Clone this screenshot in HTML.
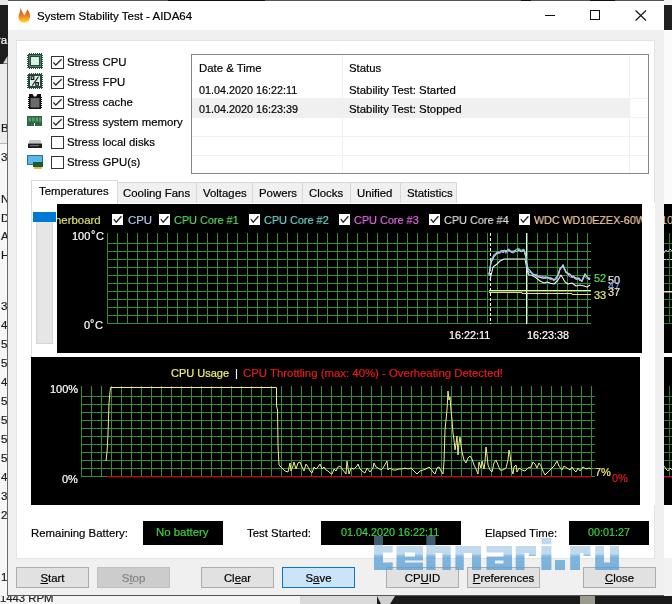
<!DOCTYPE html>
<html><head><meta charset="utf-8">
<style>
*{margin:0;padding:0;box-sizing:border-box}
html,body{width:672px;height:604px;overflow:hidden;background:#1b1b1b;position:relative;font-family:"Liberation Sans",sans-serif;font-size:11.4px;color:#000}
.a{position:absolute}
.t{position:absolute;white-space:pre;line-height:1;will-change:transform;-webkit-text-stroke:0.2px currentColor}
.cb{position:absolute;width:13px;height:13px;border:1px solid #333;background:#fff}
.cb svg{position:absolute;left:1px;top:1px}
.btn{position:absolute;height:21px;border:1px solid #adadad;background:#e1e1e1;text-align:center;line-height:21px;font-size:11.4px;will-change:transform;-webkit-text-stroke:0.2px currentColor}
.btn u{text-underline-offset:1px}
.tab{position:absolute;top:182px;height:21px;border:1px solid #d9d9d9;border-bottom:none;background:#f0f0f0}
.blk{position:absolute;background:#000}
</style></head><body>

<!-- background left strip -->
<div class="a" style="left:0;top:0;width:8px;height:5px;background:#e8e8e8"></div>
<div class="a" style="left:0;top:59px;width:8px;height:85px;background:#ececec"></div>
<svg class="a" style="left:0;top:5px" width="8" height="59"><path d="M0,0 H8 V59 H0 Z" fill="#1e1e1e"/><path d="M7.5,51 V58.5 H3 Z" fill="#d8d8d8"/></svg>
<div class="t" style="left:-3px;top:35px;color:#fff;font-size:11.5px">ra</div>
<div class="a" style="left:0;top:144px;width:8px;height:452px;background:#f6f6f6"></div>
<div class="a" style="left:0;top:143px;width:8px;height:1px;background:#b8b8b8"></div>
<div class="t" style="left:1px;top:123px;font-size:11.5px;color:#1a1a1a">B</div>
<div class="t" style="left:1px;top:152px;font-size:11.5px;color:#1a1a1a">3</div>
<div class="t" style="left:1px;top:194px;font-size:11.5px;color:#1a1a1a">N</div>
<div class="t" style="left:1px;top:212.5px;font-size:11.5px;color:#1a1a1a">D</div>
<div class="t" style="left:1px;top:231px;font-size:11.5px;color:#1a1a1a">A</div>
<div class="t" style="left:1px;top:249.5px;font-size:11.5px;color:#1a1a1a">H</div>
<div class="t" style="left:1px;top:301px;font-size:11.5px;color:#1a1a1a">3</div>
<div class="t" style="left:1px;top:320px;font-size:11.5px;color:#1a1a1a">4</div>
<div class="t" style="left:1px;top:339px;font-size:11.5px;color:#1a1a1a">5</div>
<div class="t" style="left:1px;top:358px;font-size:11.5px;color:#1a1a1a">5</div>
<div class="t" style="left:1px;top:377px;font-size:11.5px;color:#1a1a1a">4</div>
<div class="t" style="left:1px;top:396px;font-size:11.5px;color:#1a1a1a">5</div>
<div class="t" style="left:1px;top:415px;font-size:11.5px;color:#1a1a1a">5</div>
<div class="t" style="left:1px;top:434px;font-size:11.5px;color:#1a1a1a">5</div>
<div class="t" style="left:1px;top:453px;font-size:11.5px;color:#1a1a1a">5</div>
<div class="t" style="left:1px;top:472px;font-size:11.5px;color:#1a1a1a">4</div>
<div class="t" style="left:1px;top:491px;font-size:11.5px;color:#1a1a1a">3</div>
<div class="t" style="left:1px;top:510px;font-size:11.5px;color:#1a1a1a">2</div>
<div class="t" style="left:1px;top:572px;font-size:11.5px;color:#1a1a1a">1</div>
<div class="a" style="left:7px;top:63px;width:1px;height:533px;background:#6a6a6a"></div>

<!-- right strip -->
<div class="a" style="left:664px;top:0;width:8px;height:5px;background:#f4f4f4"></div>
<div class="a" style="left:664px;top:5px;width:8px;height:25px;background:#202020"></div>
<div class="a" style="left:664px;top:30px;width:8px;height:566px;background:#f2f2f2"></div>
<div class="a" style="left:664px;top:30px;width:8px;height:174px;background:#fbfbfb"></div>
<div class="a" style="left:664px;top:353px;width:8px;height:4px;background:#fff"></div>
<div class="a" style="left:664px;top:505px;width:8px;height:53px;background:#fff"></div>
<div class="blk" style="left:664px;top:204px;width:8px;height:149px"></div>
<div class="blk" style="left:664px;top:357px;width:8px;height:148px"></div>
<svg class="a" style="left:664px;top:0" width="8" height="604">
<rect x="5" y="233" width="1" height="91" fill="#2c7a2c"/>
<rect x="0" y="243" width="8" height="1" fill="#2c7a2c"/><rect x="0" y="251" width="8" height="1" fill="#2c7a2c"/><rect x="0" y="259" width="8" height="1" fill="#2c7a2c"/><rect x="0" y="267" width="8" height="1" fill="#2c7a2c"/><rect x="0" y="275" width="8" height="1" fill="#2c7a2c"/><rect x="0" y="283" width="8" height="1" fill="#2c7a2c"/><rect x="0" y="291" width="8" height="1" fill="#2c7a2c"/><rect x="0" y="299" width="8" height="1" fill="#2c7a2c"/><rect x="0" y="307" width="8" height="1" fill="#2c7a2c"/><rect x="0" y="315" width="8" height="1" fill="#2c7a2c"/><rect x="0" y="323" width="8" height="1" fill="#2c7a2c"/>
<rect x="5" y="386" width="1" height="91" fill="#2c7a2c"/>
<rect x="0" y="396" width="8" height="1" fill="#2c7a2c"/><rect x="0" y="404" width="8" height="1" fill="#2c7a2c"/><rect x="0" y="412" width="8" height="1" fill="#2c7a2c"/><rect x="0" y="420" width="8" height="1" fill="#2c7a2c"/><rect x="0" y="428" width="8" height="1" fill="#2c7a2c"/><rect x="0" y="436" width="8" height="1" fill="#2c7a2c"/><rect x="0" y="444" width="8" height="1" fill="#2c7a2c"/><rect x="0" y="452" width="8" height="1" fill="#2c7a2c"/><rect x="0" y="460" width="8" height="1" fill="#2c7a2c"/><rect x="0" y="468" width="8" height="1" fill="#2c7a2c"/><rect x="0" y="476" width="8" height="1" fill="#2c7a2c"/>
<polyline points="0,253 2,250 4,252 6,249 8,251" stroke="#a8c8f0" fill="none"/>
<polyline points="0,259.5 8,259.5" stroke="#d0d0d0" stroke-dasharray="2,1" fill="none"/>
<rect x="0" y="291" width="8" height="1.5" fill="#e8e890"/>
<polyline points="0,466 2,469 4,471 6,468 8,470" stroke="#e0e070" fill="none"/>
<rect x="0" y="476" width="8" height="1.5" fill="#b01818"/>
<text x="-3" y="224" font-family="Liberation Sans" font-size="11" fill="#f0c8a0">10</text>
</svg>

<!-- bottom strip -->
<div class="a" style="left:0;top:596px;width:377px;height:8px;background:#f4f4f4"></div>
<div class="a" style="left:300px;top:596px;width:77px;height:8px;background:#dadada"></div>
<svg class="a" style="left:377px;top:596px" width="20" height="8"><rect width="20" height="8" fill="#1a1a1a"/><path d="M0,0 H18 L13,8 H4 Z" fill="#d0d0d0"/></svg>
<div class="a" style="left:397px;top:596px;width:275px;height:8px;background:#1a1a1a"></div>
<div class="a" style="left:580px;top:596px;width:15px;height:8px;background:#9a9a90"></div>
<div class="a" style="left:0;top:596px;width:300px;height:8px;overflow:hidden"><div class="t" style="left:0;top:-3px;font-size:11.3px;color:#222">1443 RPM</div></div>

<!-- top strip -->
<div class="a" style="left:8px;top:0;width:656px;height:1px;background:#555"></div>
<div class="a" style="left:168px;top:0;width:97px;height:1px;background:#111"></div>
<div class="a" style="left:521px;top:0;width:10px;height:1px;background:#111"></div>
<div class="a" style="left:590px;top:0;width:25px;height:1px;background:#111"></div>

<!-- window -->
<div class="a" style="left:8px;top:1px;width:656px;height:29px;background:#fff"></div>
<div class="a" style="left:8px;top:30px;width:656px;height:566px;background:#f0f0f0"></div>
<div class="a" style="left:8px;top:595px;width:656px;height:1px;background:#555"></div>
<div class="t" style="left:37px;top:11px;font-size:11.5px">System Stability Test - AIDA64</div>

<!--ICONSLATER-->
<!-- panel -->
<div class="a" style="left:16px;top:40px;width:639px;height:519px;background:#fff;border:1px solid #e3e3e3"></div>


<svg class="a" style="left:0;top:0" width="60" height="180">
<defs>
<linearGradient id="fl" x1="0" y1="0" x2="0" y2="1"><stop offset="0" stop-color="#d84010"/><stop offset="0.55" stop-color="#f08020"/><stop offset="1" stop-color="#ffd820"/></linearGradient>
</defs>
<path d="M20.5,8 C21.5,11 23,13 24.5,15.5 C25.5,13.5 26.5,11.5 27.5,9.5 C29.5,12 30.5,15 30,17.5 C29.5,20.5 27,22.5 24.5,22.5 C21,22.5 18.5,20.5 18.5,17 C18.5,14 20.5,12 20.5,8 Z" fill="url(#fl)"/>
<!-- CPU -->
<rect x="28" y="54" width="14" height="14" fill="#24483a"/>
<rect x="29.5" y="55.5" width="11" height="11" fill="none" stroke="#4c7c60" stroke-width="1"/>
<rect x="31" y="57" width="8" height="8" fill="#d8efe2"/>
<rect x="29" y="53" width="1" height="1" fill="#2c5640"/><rect x="31" y="53" width="1" height="1" fill="#2c5640"/><rect x="33" y="53" width="1" height="1" fill="#2c5640"/><rect x="35" y="53" width="1" height="1" fill="#2c5640"/><rect x="37" y="53" width="1" height="1" fill="#2c5640"/><rect x="39" y="53" width="1" height="1" fill="#2c5640"/><rect x="41" y="53" width="1" height="1" fill="#2c5640"/><rect x="29" y="68" width="1" height="1" fill="#2c5640"/><rect x="31" y="68" width="1" height="1" fill="#2c5640"/><rect x="33" y="68" width="1" height="1" fill="#2c5640"/><rect x="35" y="68" width="1" height="1" fill="#2c5640"/><rect x="37" y="68" width="1" height="1" fill="#2c5640"/><rect x="39" y="68" width="1" height="1" fill="#2c5640"/><rect x="41" y="68" width="1" height="1" fill="#2c5640"/><rect x="27" y="55" width="1" height="1" fill="#2c5640"/><rect x="27" y="57" width="1" height="1" fill="#2c5640"/><rect x="27" y="59" width="1" height="1" fill="#2c5640"/><rect x="27" y="61" width="1" height="1" fill="#2c5640"/><rect x="27" y="63" width="1" height="1" fill="#2c5640"/><rect x="27" y="65" width="1" height="1" fill="#2c5640"/><rect x="27" y="67" width="1" height="1" fill="#2c5640"/><rect x="42" y="55" width="1" height="1" fill="#2c5640"/><rect x="42" y="57" width="1" height="1" fill="#2c5640"/><rect x="42" y="59" width="1" height="1" fill="#2c5640"/><rect x="42" y="61" width="1" height="1" fill="#2c5640"/><rect x="42" y="63" width="1" height="1" fill="#2c5640"/><rect x="42" y="65" width="1" height="1" fill="#2c5640"/><rect x="42" y="67" width="1" height="1" fill="#2c5640"/>
<!-- FPU -->
<rect x="28" y="74" width="14" height="14" fill="#24483a"/>
<rect x="30" y="76" width="10" height="10" fill="#dcefe4"/>
<rect x="29" y="73" width="1" height="1" fill="#2c5640"/><rect x="31" y="73" width="1" height="1" fill="#2c5640"/><rect x="33" y="73" width="1" height="1" fill="#2c5640"/><rect x="35" y="73" width="1" height="1" fill="#2c5640"/><rect x="37" y="73" width="1" height="1" fill="#2c5640"/><rect x="39" y="73" width="1" height="1" fill="#2c5640"/><rect x="41" y="73" width="1" height="1" fill="#2c5640"/><rect x="29" y="88" width="1" height="1" fill="#2c5640"/><rect x="31" y="88" width="1" height="1" fill="#2c5640"/><rect x="33" y="88" width="1" height="1" fill="#2c5640"/><rect x="35" y="88" width="1" height="1" fill="#2c5640"/><rect x="37" y="88" width="1" height="1" fill="#2c5640"/><rect x="39" y="88" width="1" height="1" fill="#2c5640"/><rect x="41" y="88" width="1" height="1" fill="#2c5640"/><rect x="27" y="75" width="1" height="1" fill="#2c5640"/><rect x="27" y="77" width="1" height="1" fill="#2c5640"/><rect x="27" y="79" width="1" height="1" fill="#2c5640"/><rect x="27" y="81" width="1" height="1" fill="#2c5640"/><rect x="27" y="83" width="1" height="1" fill="#2c5640"/><rect x="27" y="85" width="1" height="1" fill="#2c5640"/><rect x="27" y="87" width="1" height="1" fill="#2c5640"/><rect x="42" y="75" width="1" height="1" fill="#2c5640"/><rect x="42" y="77" width="1" height="1" fill="#2c5640"/><rect x="42" y="79" width="1" height="1" fill="#2c5640"/><rect x="42" y="81" width="1" height="1" fill="#2c5640"/><rect x="42" y="83" width="1" height="1" fill="#2c5640"/><rect x="42" y="85" width="1" height="1" fill="#2c5640"/><rect x="42" y="87" width="1" height="1" fill="#2c5640"/>
<path d="M31.2,76.8 h2.6 v2.6 h-2.6 Z M35.8,82.6 h2.6 v2.6 h-2.6 Z M38.5,76.8 L32.3,85.5" fill="none" stroke="#111" stroke-width="1.1"/>
<!-- cache -->
<path d="M29,94 H32.5 L34,96.5 H36 L37.5,94 H41 V109 H29 Z" fill="#111"/>
<rect x="30.5" y="98" width="9" height="9.5" fill="#6a6a6a"/>
<rect x="28" y="97" width="1" height="1" fill="#111"/><rect x="28" y="99" width="1" height="1" fill="#111"/><rect x="28" y="101" width="1" height="1" fill="#111"/><rect x="28" y="103" width="1" height="1" fill="#111"/><rect x="28" y="105" width="1" height="1" fill="#111"/><rect x="28" y="107" width="1" height="1" fill="#111"/><rect x="41" y="97" width="1" height="1" fill="#111"/><rect x="41" y="99" width="1" height="1" fill="#111"/><rect x="41" y="101" width="1" height="1" fill="#111"/><rect x="41" y="103" width="1" height="1" fill="#111"/><rect x="41" y="105" width="1" height="1" fill="#111"/><rect x="41" y="107" width="1" height="1" fill="#111"/>
<!-- memory -->
<rect x="27" y="116" width="15" height="7" fill="#2c6844"/>
<rect x="27" y="123" width="7" height="3" fill="#2c6844"/>
<rect x="35" y="123" width="7" height="3" fill="#2c6844"/>
<rect x="28.5" y="117.5" width="2.5" height="4" fill="#5c9a72"/><rect x="32" y="117.5" width="2.5" height="4" fill="#5c9a72"/><rect x="35.5" y="117.5" width="2.5" height="4" fill="#5c9a72"/><rect x="39" y="117.5" width="2" height="4" fill="#5c9a72"/>
<!-- disk -->
<rect x="29" y="140" width="12" height="3.5" rx="1" fill="#c4c4c4"/>
<rect x="28" y="143.5" width="14" height="4.5" fill="#1e1e1e"/>
<rect x="30" y="145" width="9" height="1.2" fill="#6c6c6c"/>
<!-- gpu -->
<rect x="27" y="155" width="16" height="10" fill="#2f6a8a"/>
<rect x="28" y="156" width="14" height="8" fill="#5ab8ea"/>
<rect x="33" y="162" width="10" height="5" fill="#1f5a32"/>
<rect x="34" y="167" width="8" height="2" fill="#d8c040"/>
</svg>
<!-- caption buttons -->
<div class="a" style="left:545px;top:15px;width:10px;height:1px;background:#111"></div>
<div class="a" style="left:590px;top:10px;width:10px;height:10px;border:1px solid #111"></div>
<svg class="a" style="left:635px;top:10px" width="12" height="11"><path d="M0.6,0.5 L11,10.5 M11,0.5 L0.6,10.5" stroke="#111" stroke-width="1.1"/></svg>

<!-- checkboxes -->
<div class="cb" style="left:51px;top:56px"><svg width="11" height="11" viewBox="0 0 11 11"><polyline points="0.3,4.4 2.8,7 8.6,1.3" fill="none" stroke="#2a2a2a" stroke-width="1.3"/></svg></div>
<div class="cb" style="left:51px;top:76px"><svg width="11" height="11" viewBox="0 0 11 11"><polyline points="0.3,4.4 2.8,7 8.6,1.3" fill="none" stroke="#2a2a2a" stroke-width="1.3"/></svg></div>
<div class="cb" style="left:51px;top:96px"><svg width="11" height="11" viewBox="0 0 11 11"><polyline points="0.3,4.4 2.8,7 8.6,1.3" fill="none" stroke="#2a2a2a" stroke-width="1.3"/></svg></div>
<div class="cb" style="left:51px;top:116px"><svg width="11" height="11" viewBox="0 0 11 11"><polyline points="0.3,4.4 2.8,7 8.6,1.3" fill="none" stroke="#2a2a2a" stroke-width="1.3"/></svg></div>
<div class="cb" style="left:51px;top:136px"></div>
<div class="cb" style="left:51px;top:156px"></div>
<div class="t" style="left:67px;top:57px">Stress CPU</div>
<div class="t" style="left:67px;top:77px">Stress FPU</div>
<div class="t" style="left:67px;top:97px">Stress cache</div>
<div class="t" style="left:67px;top:117px">Stress system memory</div>
<div class="t" style="left:67px;top:137px">Stress local disks</div>
<div class="t" style="left:67px;top:157px">Stress GPU(s)</div>

<!-- log list -->
<div class="a" style="left:191px;top:54px;width:458px;height:120px;background:#fff;border:1px solid #828790"></div>
<div class="a" style="left:192px;top:98px;width:437px;height:20px;background:#f0f0f0"></div>
<div class="a" style="left:342px;top:55px;width:1px;height:118px;background:#f0f0f0"></div>
<div class="a" style="left:629px;top:55px;width:1px;height:118px;background:#f0f0f0"></div>
<div class="a" style="left:629px;top:98px;width:19px;height:1px;background:#f0f0f0"></div>
<div class="a" style="left:629px;top:117px;width:19px;height:1px;background:#f0f0f0"></div>
<div class="a" style="left:192px;top:136px;width:456px;height:1px;background:#f0f0f0"></div>
<div class="a" style="left:192px;top:155px;width:456px;height:1px;background:#f0f0f0"></div>
<div class="t" style="left:199px;top:85px;font-size:10.8px">01.04.2020 16:22:11</div>
<div class="t" style="left:349px;top:85px">Stability Test: Started</div>
<div class="t" style="left:199px;top:104px;font-size:10.8px">01.04.2020 16:23:39</div>
<div class="t" style="left:349px;top:104px">Stability Test: Stopped</div>
<div class="t" style="left:199px;top:63px">Date &amp; Time</div>
<div class="t" style="left:349px;top:63px">Status</div>

<!-- tabs -->
<div class="a" style="left:31px;top:203px;width:624px;height:302px;background:#fff;border-left:1px solid #e0e0e0"></div>
<div class="tab" style="left:117px;width:80px"></div><div class="t" style="left:123px;top:188px">Cooling Fans</div>
<div class="tab" style="left:196px;width:57px"></div><div class="t" style="left:203px;top:188px">Voltages</div>
<div class="tab" style="left:252px;width:51px"></div><div class="t" style="left:259px;top:188px">Powers</div>
<div class="tab" style="left:302px;width:49px"></div><div class="t" style="left:309px;top:188px">Clocks</div>
<div class="tab" style="left:350px;width:51px"></div><div class="t" style="left:357px;top:188px">Unified</div>
<div class="tab" style="left:400px;width:57px"></div><div class="t" style="left:407px;top:188px">Statistics</div>
<div class="a" style="left:31px;top:180px;width:87px;height:24px;background:#fff;border:1px solid #d9d9d9;border-bottom:none"></div>
<div class="t" style="left:39px;top:186px">Temperatures</div>
<div class="a" style="left:33px;top:212px;width:23px;height:10px;background:#0078d7"></div>
<div class="a" style="left:36px;top:222px;width:17px;height:122px;background:#e6e6e6;border:1px solid #d6d6d6;border-top:none"></div>


<!-- upper black panel -->
<div class="blk" style="left:57px;top:204px;width:585px;height:149px"></div>
<!-- lower black panel -->
<div class="blk" style="left:31px;top:357px;width:609px;height:148px"></div>

<svg class="a" style="left:0;top:0" width="672" height="604">
<rect x="107" y="233" width="1" height="91" fill="#348c34"/>
<rect x="117" y="233" width="1" height="91" fill="#348c34"/>
<rect x="127" y="233" width="1" height="91" fill="#348c34"/>
<rect x="137" y="233" width="1" height="91" fill="#348c34"/>
<rect x="147" y="233" width="1" height="91" fill="#348c34"/>
<rect x="157" y="233" width="1" height="91" fill="#348c34"/>
<rect x="167" y="233" width="1" height="91" fill="#348c34"/>
<rect x="177" y="233" width="1" height="91" fill="#348c34"/>
<rect x="187" y="233" width="1" height="91" fill="#348c34"/>
<rect x="197" y="233" width="1" height="91" fill="#348c34"/>
<rect x="207" y="233" width="1" height="91" fill="#348c34"/>
<rect x="217" y="233" width="1" height="91" fill="#348c34"/>
<rect x="227" y="233" width="1" height="91" fill="#348c34"/>
<rect x="237" y="233" width="1" height="91" fill="#348c34"/>
<rect x="247" y="233" width="1" height="91" fill="#348c34"/>
<rect x="257" y="233" width="1" height="91" fill="#348c34"/>
<rect x="267" y="233" width="1" height="91" fill="#348c34"/>
<rect x="277" y="233" width="1" height="91" fill="#348c34"/>
<rect x="287" y="233" width="1" height="91" fill="#348c34"/>
<rect x="297" y="233" width="1" height="91" fill="#348c34"/>
<rect x="307" y="233" width="1" height="91" fill="#348c34"/>
<rect x="317" y="233" width="1" height="91" fill="#348c34"/>
<rect x="327" y="233" width="1" height="91" fill="#348c34"/>
<rect x="337" y="233" width="1" height="91" fill="#348c34"/>
<rect x="347" y="233" width="1" height="91" fill="#348c34"/>
<rect x="357" y="233" width="1" height="91" fill="#348c34"/>
<rect x="367" y="233" width="1" height="91" fill="#348c34"/>
<rect x="377" y="233" width="1" height="91" fill="#348c34"/>
<rect x="387" y="233" width="1" height="91" fill="#348c34"/>
<rect x="397" y="233" width="1" height="91" fill="#348c34"/>
<rect x="407" y="233" width="1" height="91" fill="#348c34"/>
<rect x="417" y="233" width="1" height="91" fill="#348c34"/>
<rect x="427" y="233" width="1" height="91" fill="#348c34"/>
<rect x="437" y="233" width="1" height="91" fill="#348c34"/>
<rect x="447" y="233" width="1" height="91" fill="#348c34"/>
<rect x="457" y="233" width="1" height="91" fill="#348c34"/>
<rect x="467" y="233" width="1" height="91" fill="#348c34"/>
<rect x="477" y="233" width="1" height="91" fill="#348c34"/>
<rect x="487" y="233" width="1" height="91" fill="#348c34"/>
<rect x="497" y="233" width="1" height="91" fill="#348c34"/>
<rect x="507" y="233" width="1" height="91" fill="#348c34"/>
<rect x="517" y="233" width="1" height="91" fill="#348c34"/>
<rect x="527" y="233" width="1" height="91" fill="#348c34"/>
<rect x="537" y="233" width="1" height="91" fill="#348c34"/>
<rect x="547" y="233" width="1" height="91" fill="#348c34"/>
<rect x="557" y="233" width="1" height="91" fill="#348c34"/>
<rect x="567" y="233" width="1" height="91" fill="#348c34"/>
<rect x="577" y="233" width="1" height="91" fill="#348c34"/>
<rect x="587" y="233" width="1" height="91" fill="#348c34"/>
<rect x="107" y="243" width="484" height="1" fill="#348c34"/>
<rect x="107" y="251" width="484" height="1" fill="#348c34"/>
<rect x="107" y="259" width="484" height="1" fill="#348c34"/>
<rect x="107" y="267" width="484" height="1" fill="#348c34"/>
<rect x="107" y="275" width="484" height="1" fill="#348c34"/>
<rect x="107" y="283" width="484" height="1" fill="#348c34"/>
<rect x="107" y="291" width="484" height="1" fill="#348c34"/>
<rect x="107" y="299" width="484" height="1" fill="#348c34"/>
<rect x="107" y="307" width="484" height="1" fill="#348c34"/>
<rect x="107" y="315" width="484" height="1" fill="#348c34"/>
<rect x="107" y="323" width="484" height="1" fill="#348c34"/>
<rect x="81" y="386" width="1" height="91" fill="#348c34"/>
<rect x="91" y="386" width="1" height="91" fill="#348c34"/>
<rect x="101" y="386" width="1" height="91" fill="#348c34"/>
<rect x="111" y="386" width="1" height="91" fill="#348c34"/>
<rect x="121" y="386" width="1" height="91" fill="#348c34"/>
<rect x="131" y="386" width="1" height="91" fill="#348c34"/>
<rect x="141" y="386" width="1" height="91" fill="#348c34"/>
<rect x="151" y="386" width="1" height="91" fill="#348c34"/>
<rect x="161" y="386" width="1" height="91" fill="#348c34"/>
<rect x="171" y="386" width="1" height="91" fill="#348c34"/>
<rect x="181" y="386" width="1" height="91" fill="#348c34"/>
<rect x="191" y="386" width="1" height="91" fill="#348c34"/>
<rect x="201" y="386" width="1" height="91" fill="#348c34"/>
<rect x="211" y="386" width="1" height="91" fill="#348c34"/>
<rect x="221" y="386" width="1" height="91" fill="#348c34"/>
<rect x="231" y="386" width="1" height="91" fill="#348c34"/>
<rect x="241" y="386" width="1" height="91" fill="#348c34"/>
<rect x="251" y="386" width="1" height="91" fill="#348c34"/>
<rect x="261" y="386" width="1" height="91" fill="#348c34"/>
<rect x="271" y="386" width="1" height="91" fill="#348c34"/>
<rect x="281" y="386" width="1" height="91" fill="#348c34"/>
<rect x="291" y="386" width="1" height="91" fill="#348c34"/>
<rect x="301" y="386" width="1" height="91" fill="#348c34"/>
<rect x="311" y="386" width="1" height="91" fill="#348c34"/>
<rect x="321" y="386" width="1" height="91" fill="#348c34"/>
<rect x="331" y="386" width="1" height="91" fill="#348c34"/>
<rect x="341" y="386" width="1" height="91" fill="#348c34"/>
<rect x="351" y="386" width="1" height="91" fill="#348c34"/>
<rect x="361" y="386" width="1" height="91" fill="#348c34"/>
<rect x="371" y="386" width="1" height="91" fill="#348c34"/>
<rect x="381" y="386" width="1" height="91" fill="#348c34"/>
<rect x="391" y="386" width="1" height="91" fill="#348c34"/>
<rect x="401" y="386" width="1" height="91" fill="#348c34"/>
<rect x="411" y="386" width="1" height="91" fill="#348c34"/>
<rect x="421" y="386" width="1" height="91" fill="#348c34"/>
<rect x="431" y="386" width="1" height="91" fill="#348c34"/>
<rect x="441" y="386" width="1" height="91" fill="#348c34"/>
<rect x="451" y="386" width="1" height="91" fill="#348c34"/>
<rect x="461" y="386" width="1" height="91" fill="#348c34"/>
<rect x="471" y="386" width="1" height="91" fill="#348c34"/>
<rect x="481" y="386" width="1" height="91" fill="#348c34"/>
<rect x="491" y="386" width="1" height="91" fill="#348c34"/>
<rect x="501" y="386" width="1" height="91" fill="#348c34"/>
<rect x="511" y="386" width="1" height="91" fill="#348c34"/>
<rect x="521" y="386" width="1" height="91" fill="#348c34"/>
<rect x="531" y="386" width="1" height="91" fill="#348c34"/>
<rect x="541" y="386" width="1" height="91" fill="#348c34"/>
<rect x="551" y="386" width="1" height="91" fill="#348c34"/>
<rect x="561" y="386" width="1" height="91" fill="#348c34"/>
<rect x="571" y="386" width="1" height="91" fill="#348c34"/>
<rect x="581" y="386" width="1" height="91" fill="#348c34"/>
<rect x="591" y="386" width="1" height="91" fill="#348c34"/>
<rect x="81" y="396" width="514" height="1" fill="#348c34"/>
<rect x="81" y="404" width="514" height="1" fill="#348c34"/>
<rect x="81" y="412" width="514" height="1" fill="#348c34"/>
<rect x="81" y="420" width="514" height="1" fill="#348c34"/>
<rect x="81" y="428" width="514" height="1" fill="#348c34"/>
<rect x="81" y="436" width="514" height="1" fill="#348c34"/>
<rect x="81" y="444" width="514" height="1" fill="#348c34"/>
<rect x="81" y="452" width="514" height="1" fill="#348c34"/>
<rect x="81" y="460" width="514" height="1" fill="#348c34"/>
<rect x="81" y="468" width="514" height="1" fill="#348c34"/>
<rect x="81" y="476" width="514" height="1" fill="#348c34"/>
<rect x="107" y="476" width="485" height="1.4" fill="#b01414"/>
<line x1="490.5" y1="233" x2="490.5" y2="324" stroke="#fff" stroke-width="1" stroke-dasharray="3,2"/>
<rect x="526" y="233" width="1" height="91" fill="#f0f0f0"/>
<polyline points="489,290.5 591,290.5" stroke="#f0e8a0" stroke-width="1" fill="none"/>
<polyline points="489,292.5 522,292.5 522,293.5 572,293.5 572,294.5 591,294.5" stroke="#e8e070" stroke-width="1" fill="none"/>
<polyline points="490,280 493,267 497,264 500,261 504,259 507,259 512,259 518,259 525,259 527,270 529,275 531,275 535,277 540,281 544,283 547,282 550,283 554,284 558,280 561,275 565,282 568,284 572,283 576,286 580,285 584,286 587,287 590,285" fill="none" stroke="#f4f4f4" stroke-width="1.1" stroke-linejoin="round"/>
<polyline points="489,274.06 490.0,269.39 491,262.68 492.5,258.37 494,255.99 495.5,254.37 497,253.39 498.5,253.24 500,250.96 501.5,250.29 503,251.86 504.5,251.33 506,252.67 507.5,249.73 509,249.86 510.5,251.57 512,251.31 513.5,252.64 515,252.03 516.5,249.3 518,248.79 519.5,250.61 521,252.12 522.5,250.2 524,249.27 525.0,253.8 526,256.79 526.5,260.79 527,264.84 527.5,267.49 528,269.32 529.5,270.31 531,271.28 533.0,273.4 535,274.46 536.5,274.28 538,276.86 539.5,276.64 541,277.36 543.0,276.2 545,278.26 546.5,278.42 548,277.03 549.5,278.07 551,279.57 552.5,280.04 554,281.12 555.5,278.8 557,278.84 558.5,273.94 560,268.5 561.5,267.22 563,265.98 564.5,269.39 566,272.01 567.0,273.23 568,272.81 570.0,274.34 572,276.76 573.5,276.78 575,277.16 577.0,278.62 579,279.52 580.5,280.45 582,280.68 583.5,277.84 585,275.02 586.5,277.21 588,278.05 589.0,278.23 590,278.97" fill="none" stroke="#5a78e8" stroke-width="1" stroke-linejoin="round"/>
<polyline points="489,275.81 490.0,269.29 491,260.22 492.5,257.3 494,256.47 495.5,254.68 497,252.99 498.5,251.45 500,251.81 501.5,251.31 503,250.73 504.5,250.02 506,251.3 507.5,250.19 509,250.14 510.5,251.93 512,252.79 513.5,251.13 515,250.34 516.5,249.33 518,248.16 519.5,248.64 521,250.4 522.5,249.48 524,249.15 525.0,254.63 526,257.57 526.5,261.17 527,263.74 527.5,265.63 528,269.0 529.5,269.45 531,271.53 533.0,274.44 535,275.0 536.5,274.08 538,276.63 539.5,276.85 541,277.18 543.0,277.67 545,277.26 546.5,277.83 548,277.08 549.5,279.39 551,279.83 552.5,278.02 554,280.23 555.5,279.12 557,277.39 558.5,273.09 560,268.47 561.5,267.72 563,264.5 564.5,268.95 566,271.08 567.0,273.6 568,274.65 570.0,274.39 572,275.69 573.5,277.71 575,278.14 577.0,277.96 579,277.7 580.5,279.0 582,281.07 583.5,276.54 585,275.67 586.5,275.33 588,278.68 589.0,277.45 590,279.82" fill="none" stroke="#58d058" stroke-width="1" stroke-linejoin="round"/>
<polyline points="489,274.46 490.0,268.94 491,261.88 492.5,259.63 494,256.7 495.5,253.41 497,251.74 498.5,253.88 500,251.53 501.5,250.95 503,252.89 504.5,251.7 506,253.38 507.5,251.22 509,250.75 510.5,250.18 512,252.73 513.5,252.98 515,251.37 516.5,251.57 518,250.85 519.5,249.4 521,252.13 522.5,251.09 524,249.66 525.0,252.8 526,259.47 526.5,261.71 527,266.0 527.5,269.01 528,270.99 529.5,272.65 531,271.96 533.0,274.76 535,275.12 536.5,277.19 538,277.51 539.5,275.51 541,276.14 543.0,276.39 545,278.79 546.5,277.6 548,278.71 549.5,278.16 551,279.32 552.5,279.43 554,279.82 555.5,279.57 557,278.57 558.5,275.09 560,269.88 561.5,268.67 563,266.44 564.5,270.37 566,272.85 567.0,272.22 568,275.45 570.0,276.79 572,277.6 573.5,277.52 575,278.98 577.0,277.88 579,280.36 580.5,280.54 582,280.61 583.5,276.9 585,276.43 586.5,278.37 588,276.98 589.0,279.76 590,279.01" fill="none" stroke="#e070e0" stroke-width="1" stroke-linejoin="round"/>
<polyline points="489,273.94 490.0,267.06 491,261.4 492.5,257.71 494,254.45 495.5,253.92 497,253.9 498.5,253.07 500,252.46 501.5,250.4 503,250.81 504.5,250.56 506,250.76 507.5,249.57 509,248.88 510.5,251.93 512,252.65 513.5,252.08 515,251.57 516.5,249.32 518,249.15 519.5,250.57 521,251.37 522.5,251.22 524,250.79 525.0,252.51 526,258.0 526.5,261.69 527,264.72 527.5,266.27 528,269.62 529.5,269.52 531,272.95 533.0,274.25 535,274.84 536.5,274.62 538,276.88 539.5,276.41 541,277.8 543.0,277.7 545,276.72 546.5,276.95 548,277.98 549.5,278.0 551,277.72 552.5,278.64 554,280.6 555.5,277.38 557,276.39 558.5,273.56 560,268.07 561.5,266.8 563,264.62 564.5,267.75 566,273.13 567.0,271.82 568,273.45 570.0,273.84 572,276.08 573.5,276.06 575,277.28 577.0,278.91 579,278.18 580.5,279.87 582,281.86 583.5,276.55 585,273.44 586.5,275.42 588,278.46 589.0,278.53 590,277.94" fill="none" stroke="#70dcdc" stroke-width="1" stroke-linejoin="round"/>
<polyline points="489,275.48 490.0,269.24 491,262.86 492.5,260.19 494,256.74 495.5,255.65 497,252.14 498.5,252.62 500,253.19 501.5,252.03 503,252.1 504.5,250.83 506,252.13 507.5,250.63 509,250.3 510.5,251.37 512,251.11 513.5,251.07 515,250.71 516.5,251.63 518,250.8 519.5,249.94 521,251.87 522.5,249.89 524,250.46 525.0,253.36 526,257.08 526.5,262.53 527,264.55 527.5,267.06 528,271.28 529.5,272.03 531,271.73 533.0,274.73 535,275.29 536.5,276.1 538,275.54 539.5,277.69 541,277.63 543.0,278.25 545,278.08 546.5,277.25 548,277.89 549.5,277.95 551,278.41 552.5,278.73 554,279.76 555.5,279.43 557,277.09 558.5,274.1 560,268.84 561.5,266.77 563,265.91 564.5,268.66 566,271.79 567.0,273.16 568,274.66 570.0,274.21 572,277.26 573.5,276.13 575,278.76 577.0,279.47 579,278.12 580.5,280.84 582,280.9 583.5,278.38 585,274.1 586.5,275.68 588,277.49 589.0,279.72 590,278.52" fill="none" stroke="#c0d0f0" stroke-width="1" stroke-linejoin="round"/>
<polyline points="106,461 107,452 108,434 109,403 110,392 110.5,387.5 276.5,387.5 276.5,406 277.5,410 278,445 279,465 282,468 285,471 288,472 290,463 291,471 293,466 294,462 296,469 298,463 300,462 302,467 304,471 306,464 308,467 310,471 312,473 314,467 316,469 318,467 320,464 322,469 324,467 326,470 328,471 330,473 332,474 334,469 336,471 338,467 340,466 343,470 346,474 347,461 349,474 351,468 354,469 357,466 358,464 360,469 362,471 365,473 367,468 370,472 373,468 374,463 376,467 378,468 381,470 383,468 387,461 388,470 390,468 393,470 396,470 399,469 402,469 405,468 408,469 411,468 414,471 417,474 420,471 423,470 426,469 429,467 431,469 433,472 435,474 437,468 439,467 441,471 443,474 444,462 445,430 447,410 448,391 449,400 450,397 451,410 452,420 453,433 454,440 455,450 456,444 457,436 458,455 459,443 460,437 461,445 462,452 464,460 466,463 468,458 470,456 472,459 474,465 476,469 478,474 479,462 480,465 481,468 482,461 483,465 484,469 485,462 486,447 487,455 488,465 490,470 492,472 494,463 496,460 498,465 500,470 503,470 506,468 507,464 508,460 509,450 510,455 511,463 512,471 513,474 514,467 516,465 517,472 519,468 522,470 525,471 528,468 531,467 533,462 535,464 537,468 539,463 541,466 543,471 545,475 548,472 551,469 554,466 557,461 559,466 562,470 564,466 567,468 570,470 572,467 574,470 576,472 578,468 580,471 583,467 586,469 589,468 591,469" fill="none" stroke="#f0f080" stroke-width="1" stroke-linejoin="round"/>
</svg>

<div class="a" style="left:57px;top:210px;width:46px;height:18px;overflow:hidden"><div class="t" style="left:-2px;top:5px;color:#dede6e">herboard</div></div>
<div class="a" style="left:112px;top:214px;width:11px;height:11px;background:#fff"><svg width="11" height="11" viewBox="0 0 11 11" style="position:absolute;left:0;top:0"><polyline points="1.8,5.2 4.2,8.2 9.4,2.2" fill="none" stroke="#222" stroke-width="1.3"/></svg></div><div class="t" style="left:128px;top:215px;color:#b4c4e4">CPU</div>
<div class="a" style="left:159px;top:214px;width:11px;height:11px;background:#fff"><svg width="11" height="11" viewBox="0 0 11 11" style="position:absolute;left:0;top:0"><polyline points="1.8,5.2 4.2,8.2 9.4,2.2" fill="none" stroke="#222" stroke-width="1.3"/></svg></div><div class="t" style="left:174px;top:215px;color:#5cd85c;transform:scaleX(0.955);transform-origin:0 0">CPU Core #1</div>
<div class="a" style="left:249px;top:214px;width:11px;height:11px;background:#fff"><svg width="11" height="11" viewBox="0 0 11 11" style="position:absolute;left:0;top:0"><polyline points="1.8,5.2 4.2,8.2 9.4,2.2" fill="none" stroke="#222" stroke-width="1.3"/></svg></div><div class="t" style="left:264px;top:215px;color:#6cd4d4;transform:scaleX(0.955);transform-origin:0 0">CPU Core #2</div>
<div class="a" style="left:339px;top:214px;width:11px;height:11px;background:#fff"><svg width="11" height="11" viewBox="0 0 11 11" style="position:absolute;left:0;top:0"><polyline points="1.8,5.2 4.2,8.2 9.4,2.2" fill="none" stroke="#222" stroke-width="1.3"/></svg></div><div class="t" style="left:354px;top:215px;color:#e46ce4;transform:scaleX(0.955);transform-origin:0 0">CPU Core #3</div>
<div class="a" style="left:429px;top:214px;width:11px;height:11px;background:#fff"><svg width="11" height="11" viewBox="0 0 11 11" style="position:absolute;left:0;top:0"><polyline points="1.8,5.2 4.2,8.2 9.4,2.2" fill="none" stroke="#222" stroke-width="1.3"/></svg></div><div class="t" style="left:444px;top:215px;color:#dcdcdc;transform:scaleX(0.955);transform-origin:0 0">CPU Core #4</div>
<div class="a" style="left:519px;top:214px;width:11px;height:11px;background:#fff"><svg width="11" height="11" viewBox="0 0 11 11" style="position:absolute;left:0;top:0"><polyline points="1.8,5.2 4.2,8.2 9.4,2.2" fill="none" stroke="#222" stroke-width="1.3"/></svg></div><div class="a" style="left:534px;top:210px;width:108px;height:18px;overflow:hidden"><div class="t" style="left:0;top:5px;color:#f4cca4;transform:scaleX(0.94);transform-origin:0 0">WDC WD10EZEX-60WN4A0</div></div>
<div class="t" style="left:72px;top:231px;color:#fff;font-size:11px">100</div><div class="t" style="left:90.5px;top:229px;color:#fff;font-size:11px">°</div><div class="t" style="left:95.5px;top:231px;color:#fff;font-size:11px">C</div>
<div class="t" style="left:83.5px;top:320px;color:#fff;font-size:11px">0</div><div class="t" style="left:90px;top:318px;color:#fff;font-size:11px">°</div><div class="t" style="left:95px;top:320px;color:#fff;font-size:11px">C</div>
<div class="t" style="left:449px;top:330px;color:#fff;font-size:10.8px">16:22:11</div>
<div class="t" style="left:527px;top:330px;color:#fff;font-size:10.8px">16:23:38</div>
<div class="t" style="left:594px;top:273px;color:#5cd85c;font-size:11px">52</div>
<div class="t" style="left:608px;top:275px;color:#e8e8e8;font-size:11px">50</div>
<div class="t" style="left:608px;top:281px;color:#7c94e4;font-size:11px">47</div>
<div class="t" style="left:608px;top:287px;color:#f0dcc0;font-size:11px">37</div>
<div class="t" style="left:594px;top:290px;color:#e4e470;font-size:11px">33</div>
<div class="t" style="left:171px;top:368px;color:#f0f070;font-size:11px">CPU Usage</div>
<div class="t" style="left:234.5px;top:368px;color:#fff">|</div>
<div class="t" style="left:243px;top:368px;color:#e81c1c">CPU Throttling (max: 40%) - Overheating Detected!</div>
<div class="t" style="left:50px;top:384px;color:#fff;font-size:11px">100%</div>
<div class="t" style="left:62px;top:474px;color:#fff;font-size:11px">0%</div>
<div class="t" style="left:595px;top:467px;color:#f0f070;font-size:11px">7%</div>
<div class="t" style="left:612px;top:473px;color:#e81c1c;font-size:11px">0%</div>
<!-- status -->
<div class="t" style="left:31px;top:528px">Remaining Battery:</div>
<div class="blk" style="left:143px;top:521px;width:80px;height:24px"></div>
<div class="t" style="left:247px;top:528px">Test Started:</div>
<div class="blk" style="left:321px;top:521px;width:140px;height:24px"></div>
<div class="t" style="left:485px;top:528px">Elapsed Time:</div>
<div class="blk" style="left:569px;top:521px;width:80px;height:24px"></div>

<div class="t" style="left:156px;top:527px;color:#3cd23c">No battery</div>
<div class="t" style="left:341px;top:527px;color:#3cd23c;font-size:10.8px">01.04.2020 16:22:11</div>
<div class="t" style="left:588px;top:527px;color:#3cd23c;font-size:10.8px">00:01:27</div>
<!-- buttons -->
<div class="btn" style="left:16px;top:567px;width:73px"><u>S</u>tart</div>
<div class="btn" style="left:97px;top:567px;width:73px;background:#cccccc;border-color:#bfbfbf;color:#838383">S<u>t</u>op</div>
<div class="btn" style="left:201px;top:567px;width:73px">Cl<u>e</u>ar</div>
<div class="btn" style="left:282px;top:567px;width:73px;background:#cce4f7;border-color:#0078d7">S<u>a</u>ve</div>
<div class="btn" style="left:386px;top:567px;width:73px">CP<u>U</u>ID</div>
<div class="btn" style="left:467px;top:567px;width:73px"><u>P</u>references</div>
<div class="btn" style="left:583px;top:567px;width:73px"><u>C</u>lose</div>

<svg class="a" style="left:0;top:0" width="672" height="604">
<defs><linearGradient id="wg" x1="0" y1="536" x2="0" y2="571" gradientUnits="userSpaceOnUse">
<stop offset="0" stop-color="#82b4dc" stop-opacity="0.5"/><stop offset="0.5" stop-color="#82b4dc" stop-opacity="0.5"/><stop offset="0.58" stop-color="#5aa0d6" stop-opacity="0.75"/><stop offset="1" stop-color="#5a9ed4" stop-opacity="0.78"/></linearGradient></defs>
<path d="M374,536H383V570H374Z M374,546H392.7V552.5H374Z M383,562.5H392.7V570H383Z M396.5,546H423V552.5H396.5Z M396.5,546H405V570H396.5Z M396.5,562.5H423V570H396.5Z M405,556.5H423V560.5H405Z M415,546H423V560.5H415Z M426.3,536H435.5V570H426.3Z M426.3,546H450.7V553H426.3Z M442.4,546H450.7V570H442.4Z M455.4,546H481V553H455.4Z M455.4,546H463.8V570H455.4Z M472,546H481V570H472Z M486.5,546H512V552.5H486.5Z M503.5,546H512V570H503.5Z M486.5,556.5H512V560.5H486.5Z M486.5,556.5H495V570H486.5Z M486.5,563.5H512V570H486.5Z M515.7,546H524.5V570H515.7Z M515.7,546H536V553H515.7Z M529,546H536V556H529Z M541.3,537.7H551.4V544.3H541.3Z M541.3,546H551.4V570H541.3Z M555,560H565V570H555Z M570.2,546H580V570H570.2Z M570.2,546H590.5V553H570.2Z M583.5,546H590.5V556H583.5Z M595.2,546H604V570H595.2Z M610,546H619V570H610Z M595.2,562.5H619V570H595.2Z" fill="url(#wg)"/>
</svg>
</body></html>
